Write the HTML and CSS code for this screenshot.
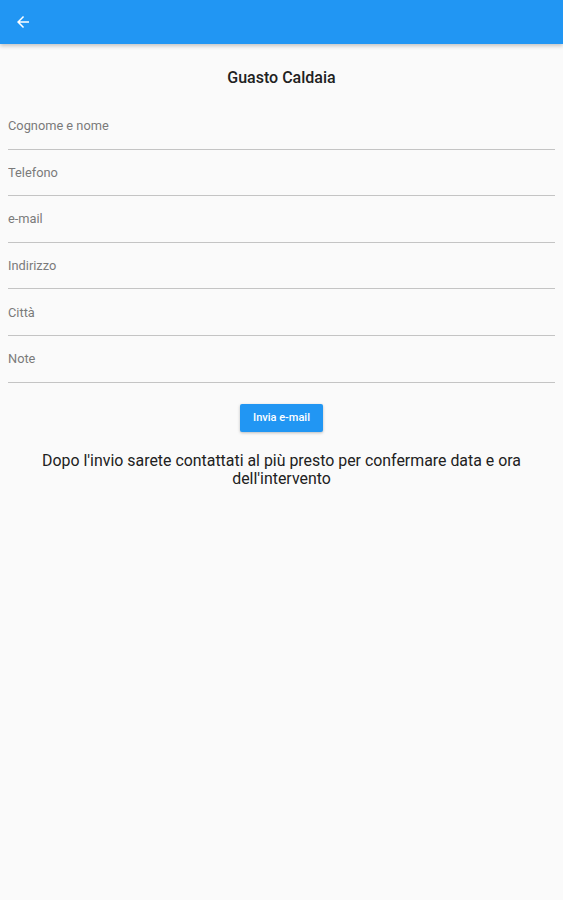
FILE: index.html
```html
<!DOCTYPE html>
<html>
<head>
    <title>Guasto Caldaia</title>
    <link rel="stylesheet" href="styles.css">
</head>
<body>
    <header class="app-bar">
        <button class="back" type="button" aria-label="Indietro">
            <svg width="18" height="18" viewBox="0 0 24 24"><path d="M20 11H7.83l5.59-5.59L12 4l-8 8 8 8 1.41-1.41L7.83 13H20v-2z" fill="#fff"/></svg>
        </button>
    </header>

    <main class="content">
        <h1 class="title">Guasto Caldaia</h1>
        <form class="form">
            <div class="field"><input type="text" placeholder="Cognome e nome"></div>
            <div class="field"><input type="tel" placeholder="Telefono"></div>
            <div class="field"><input type="email" placeholder="e-mail"></div>
            <div class="field"><input type="text" placeholder="Indirizzo"></div>
            <div class="field"><input type="text" placeholder="Città"></div>
            <div class="field"><input type="text" placeholder="Note"></div>
            <div class="actions">
                <button class="send" type="submit">Invia e-mail</button>
            </div>
        </form>
        <p class="notice">Dopo l'invio sarete contattati al più presto per confermare data e ora dell'intervento</p>
    </main>
</body>
</html>
```

FILE: styles.css
```css
body { margin: 0; background: #fafafa; font-family: Roboto, "Noto Sans", Arial, sans-serif; color: #212121; }
.app-bar { height: 44px; background: #2196f3; display: flex; align-items: center; padding-left: 14px; box-shadow: 0 2px 4px rgba(0,0,0,0.22); position: relative; }
.back { background: none; border: none; padding: 0; display: flex; cursor: pointer; }
.content { padding: 0 8px; }
.title { margin: 0; padding-top: 25px; height: 34px; font-size: 16px; line-height: 18px; font-weight: 500; text-align: center; }
.field { height: 45.6px; border-bottom: 1px solid #c4c4c4; display: flex; align-items: center; }
.field input { width: 100%; border: none; background: transparent; font-family: inherit; font-size: 12.8px; color: #212121; padding: 0; outline: none; }
.field input::placeholder { color: #7a7a7a; }
.actions { display: flex; justify-content: center; padding-top: 21px; }
.send { width: 83px; height: 28px; background: #2196f3; color: #fff; border: none; border-radius: 2px; font-family: inherit; font-size: 11px; font-weight: 500; box-shadow: 0 1px 3px rgba(0,0,0,0.25); cursor: pointer; }
.notice { margin: 20px 0 0; padding: 0 20px; font-size: 15.9px; line-height: 18px; text-align: center; color: #212121; }
```
